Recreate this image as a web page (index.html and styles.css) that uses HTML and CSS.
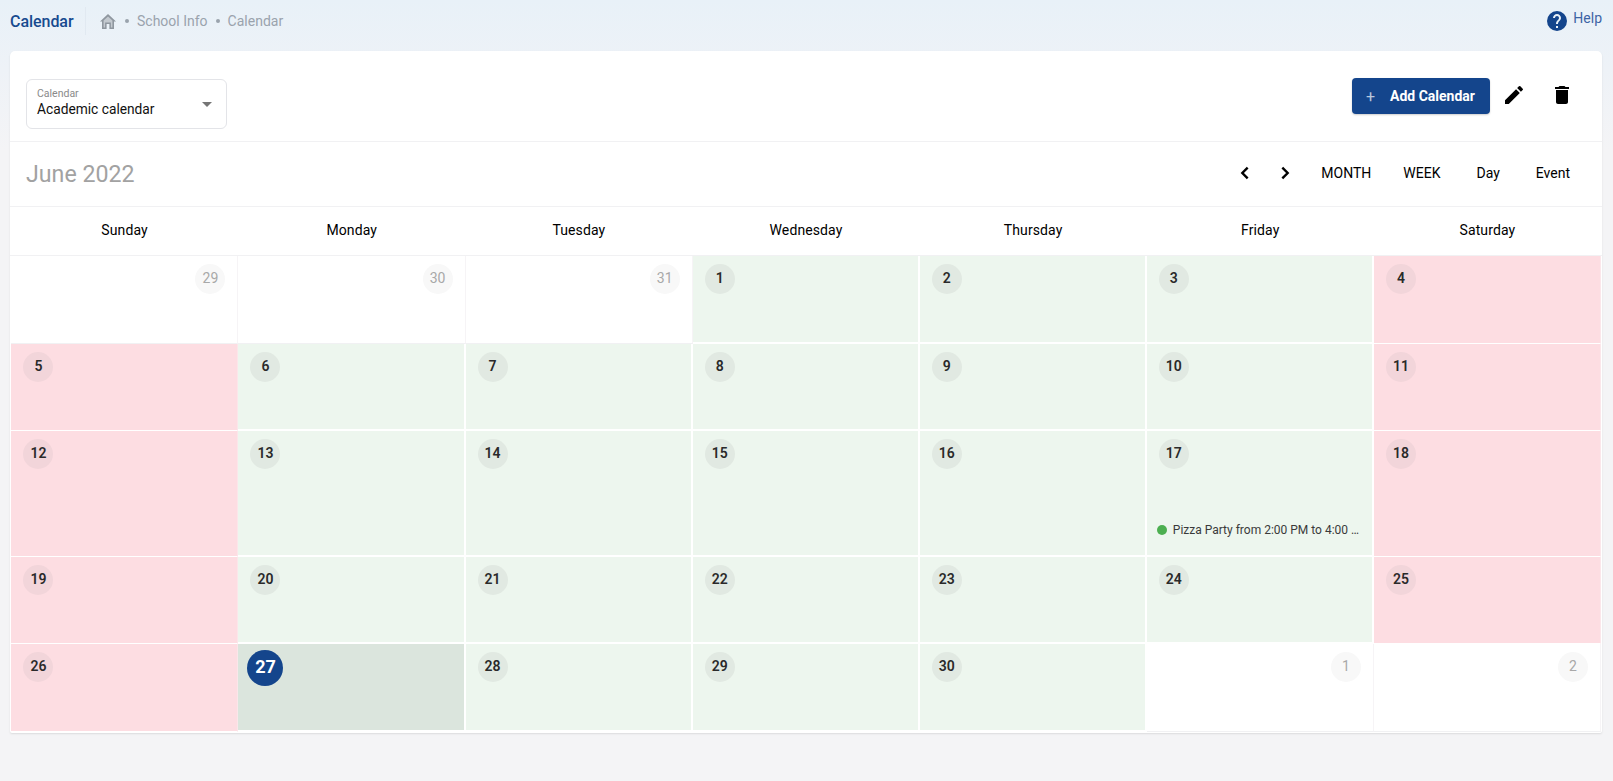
FILE: index.html
```html
<!DOCTYPE html>
<html lang="en">
<head>
<meta charset="utf-8">
<title>Calendar</title>
<link rel="stylesheet" href="styles.css">
</head>
<body>
<header class="topbar">
  <div class="crumbs">
    <span class="page-name">Calendar</span>
    <span class="divider"></span>
    <svg class="home" viewBox="0 0 16 15"><path class="home-fill" d="M8 1 2 6.5V14h4v-5h4v5h4V6.5L8 1z"/><path fill-rule="evenodd" d="M8 0 0 7.4h2V15h4.6v-5h2.8v5H14V7.4h2L8 0zm0 2.6 4.4 4v6.9h-1.5V8.5H5.1v5H3.6V6.6L8 2.6z"/></svg>
    <span class="dot"></span><span>School Info</span>
    <span class="dot"></span><span>Calendar</span>
  </div>
  <div class="help">
    <svg class="help-icon" viewBox="0 0 24 24"><path d="M12 2a10 10 0 1 0 0 20 10 10 0 0 0 0-20zm1 17h-2v-2h2v2zm2.07-7.75-.9.92C13.45 12.9 13 13.5 13 15h-2v-.5c0-1.1.45-2.1 1.17-2.83l1.24-1.26c.37-.36.59-.86.59-1.41 0-1.1-.9-2-2-2s-2 .9-2 2H8c0-2.21 1.79-4 4-4s4 1.79 4 4c0 .88-.36 1.68-.93 2.25z"/></svg>
    <span>Help</span>
  </div>
</header>
<main class="card">
  <section class="toolbar">
    <div class="select">
      <div class="select-text">
        <span class="select-label">Calendar</span>
        <span class="select-value">Academic calendar</span>
      </div>
      <span class="caret"></span>
    </div>
    <div class="actions">
      <button class="add-btn"><span class="plus">+</span>Add Calendar</button>
      <svg class="act-icon pencil" viewBox="0 0 24 24"><path d="M3 17.25V21h3.75L17.81 9.94l-3.75-3.75L3 17.25zM20.71 7.04a1 1 0 0 0 0-1.41l-2.34-2.34a1 1 0 0 0-1.41 0l-1.83 1.83 3.75 3.75 1.83-1.83z"/></svg>
      <svg class="act-icon trash" viewBox="0 0 24 24"><path d="M6 19c0 1.1.9 2 2 2h8c1.1 0 2-.9 2-2V7H6v12zM19 4h-3.5l-1-1h-5l-1 1H5v2h14V4z"/></svg>
    </div>
  </section>
  <section class="month-bar">
    <h1 class="month-title">June 2022</h1>
    <nav class="views">
      <svg class="chev" viewBox="0 0 12 12"><path d="M8 2 4 6l4 4"/></svg>
      <svg class="chev chev-next" viewBox="0 0 12 12"><path d="M4 2l4 4-4 4"/></svg>
      <span class="view view-month">MONTH</span>
      <span class="view view-week">WEEK</span>
      <span class="view view-day">Day</span>
      <span class="view view-event">Event</span>
    </nav>
  </section>
  <div class="weekdays">
    <span>Sunday</span><span>Monday</span><span>Tuesday</span><span>Wednesday</span><span>Thursday</span><span>Friday</span><span>Saturday</span>
  </div>
  <div class="grid">
    <div class="cell other"><span class="num">29</span></div>
    <div class="cell other"><span class="num">30</span></div>
    <div class="cell other"><span class="num">31</span></div>
    <div class="cell work"><span class="num">1</span></div>
    <div class="cell work"><span class="num">2</span></div>
    <div class="cell work"><span class="num">3</span></div>
    <div class="cell off"><span class="num">4</span></div>

    <div class="cell off"><span class="num">5</span></div>
    <div class="cell work"><span class="num">6</span></div>
    <div class="cell work"><span class="num">7</span></div>
    <div class="cell work"><span class="num">8</span></div>
    <div class="cell work"><span class="num">9</span></div>
    <div class="cell work"><span class="num">10</span></div>
    <div class="cell off"><span class="num">11</span></div>

    <div class="cell off"><span class="num">12</span></div>
    <div class="cell work"><span class="num">13</span></div>
    <div class="cell work"><span class="num">14</span></div>
    <div class="cell work"><span class="num">15</span></div>
    <div class="cell work"><span class="num">16</span></div>
    <div class="cell work">
      <span class="num">17</span>
      <div class="event"><span class="event-dot"></span><span class="event-text">Pizza Party from 2:00 PM to 4:00 …</span></div>
    </div>
    <div class="cell off"><span class="num">18</span></div>

    <div class="cell off"><span class="num">19</span></div>
    <div class="cell work"><span class="num">20</span></div>
    <div class="cell work"><span class="num">21</span></div>
    <div class="cell work"><span class="num">22</span></div>
    <div class="cell work"><span class="num">23</span></div>
    <div class="cell work"><span class="num">24</span></div>
    <div class="cell off"><span class="num">25</span></div>

    <div class="cell off"><span class="num">26</span></div>
    <div class="cell today"><span class="num">27</span></div>
    <div class="cell work"><span class="num">28</span></div>
    <div class="cell work"><span class="num">29</span></div>
    <div class="cell work"><span class="num">30</span></div>
    <div class="cell other"><span class="num">1</span></div>
    <div class="cell other"><span class="num">2</span></div>
  </div>
</main>
</body>
</html>
```

FILE: styles.css
```css
* { box-sizing: border-box; }
html, body { height: 100%; }
body {
  margin: 0;
  overflow: hidden;
  font-family: Roboto, "Liberation Sans", sans-serif;
  background: linear-gradient(180deg, #e8f1f8 0, #eef2f7 70px, #f4f4f6 150px);
  color: #000;
}
.topbar {
  height: 51px;
  padding: 0 11px 9px 10px;
  display: flex;
  justify-content: space-between;
  align-items: center;
}
.crumbs {
  display: flex;
  align-items: center;
  font-size: 14px;
  color: #9aa3ad;
}
.page-name { font-size: 16px; font-weight: 500; color: #174a8f; width: 75px; letter-spacing: -.05px; }
.divider { width: 1px; height: 28px; background: #e1e9f1; }
.home { width: 16px; height: 15px; fill: #8f979f; margin-left: 14px; display: block; }
.home-fill { fill: #c3c9cf; }
.dot { width: 4px; height: 4px; border-radius: 50%; background: #9aa3ad; margin: 0 8px 0 9px; }
.dot + span + .dot { margin: 0 8px; }
.help {
  display: flex;
  align-items: flex-start;
  gap: 4px;
  font-size: 14px;
  color: #3c64a5;
  line-height: 18px;
}
.help-icon { width: 24px; height: 24px; fill: #14458c; display: block; }
.card {
  margin: 0 11px 0 10px;
  height: 682px;
  background: #fff;
  border-radius: 5px 5px 2px 2px;
  box-shadow: 0 1px 2px rgba(0, 0, 0, .1);
  padding: 0 1px 0 1.4px;
}
.toolbar {
  height: 91px;
  margin: 0 -1px 0 -1.4px;
  padding: 27px 28px 0 16px;
  border-bottom: 1px solid #f1f1f3;
  display: flex;
  justify-content: space-between;
  align-items: flex-start;
}
.select {
  width: 201px;
  height: 50px;
  margin-top: 1px;
  border: 1px solid #e3e4e8;
  border-radius: 6px;
  padding: 7px 14px 0 10px;
  display: flex;
  justify-content: space-between;
  align-items: center;
  align-self: flex-start;
}
.select-text { display: flex; flex-direction: column; margin-top: -9px; }
.select-label { font-size: 10.5px; line-height: 12px; color: #8a8a8a; }
.select-value { font-size: 13.75px; line-height: 18px; color: #111; }
.caret {
  width: 0; height: 0;
  border-left: 5px solid transparent;
  border-right: 5px solid transparent;
  border-top: 5px solid #757575;
  margin-top: -7px;
}
.actions { display: flex; align-items: flex-start; }
.add-btn {
  width: 138px;
  height: 36px;
  border: 0;
  border-radius: 4px;
  background: #14458c;
  color: #fff;
  font: 700 14px Roboto, "Liberation Sans", sans-serif;
  box-shadow: 0 1px 2px rgba(0, 0, 0, .2);
  display: flex;
  align-items: center;
  padding: 0 0 0 14px;
}
.plus { font-weight: 400; font-size: 16px; color: #b9c7dd; width: 24px; text-align: left; }
.act-icon { fill: #000; width: 24px; height: 24px; display: block; }
.pencil { margin: 5px 0 0 12px; }
.trash { margin: 5px 0 0 24px; }
.month-bar {
  height: 65px;
  margin: 0 -1px 0 -1.4px;
  padding: 0 32px 2px 16px;
  border-bottom: 1px solid #f1f1f3;
  display: flex;
  justify-content: space-between;
  align-items: center;
}
.month-title { margin: 0 0 -2px; font-size: 23.2px; font-weight: 400; color: #a2a2a2; }
.views { display: flex; align-items: center; font-size: 14px; color: #000; }
.chev { width: 16px; height: 16px; fill: none; stroke: #000; stroke-width: 1.8; }
.chev-next { margin-left: 24px; }
.view-month { margin-left: 28px; }
.view-week { margin-left: 32px; }
.view-day { margin-left: 36px; }
.view-event { margin-left: 36px; }
.weekdays {
  height: 49px;
  display: grid;
  grid-template-columns: repeat(7, 1fr);
  align-items: center;
  text-align: center;
  font-size: 14px;
  font-weight: 400;
  letter-spacing: .1px;
  color: #000;
  margin: 0 -1px 0 -1.4px;
  border-bottom: 1px solid #f1f1f3;
  padding: 0 1px 2px 1px;
}
.grid {
  display: grid;
  grid-template-columns: repeat(7, 1fr);
  grid-template-rows: 88px 87px 126px 87px 88px;
}
.cell {
  position: relative;
  min-width: 0;
  padding: 8px 12px;
  border-bottom: 1px solid #fff;
  display: flex;
  flex-direction: column;
  align-items: flex-start;
}
.num {
  width: 30px;
  height: 30px;
  padding-bottom: 2px;
  border-radius: 50%;
  display: flex;
  align-items: center;
  justify-content: center;
  font-size: 14px;
  font-weight: 600;
  color: #2a2a2a;
}
.work { background: #edf6ee; border-right: 2px solid #fff; border-bottom: 2px solid #fff; }
.work .num { background: #e1e9e2; }
.off { background: #fddde2; border-right: 1px solid #fbe6ea; }
.off .num { background: #f2d5da; }
.other {
  background: #fff;
  align-items: flex-end;
  border-right: 1px solid #f6f4f6;
  border-bottom: 1px solid #f1f1f3;
}
.other .num { background: #f8f8f8; color: #a8a8a8; font-weight: 400; }
.today { background: #dbe5dd; padding: 6px 9px; border-right: 2px solid #fff; border-bottom: 2px solid #fff; }
.today .num {
  width: 36px;
  height: 36px;
  padding-bottom: 3px;
  background: #14458c;
  color: #fff;
  font-size: 18px;
  font-weight: 700;
}
.event {
  position: absolute;
  left: 10px;
  top: 91px;
  display: flex;
  align-items: center;
  gap: 6px;
  font-size: 12px;
  line-height: 16px;
  color: #3a3a3a;
}
.event-dot { width: 10px; height: 10px; border-radius: 50%; background: #4caf50; flex: none; }
.event-text { white-space: nowrap; }
```
